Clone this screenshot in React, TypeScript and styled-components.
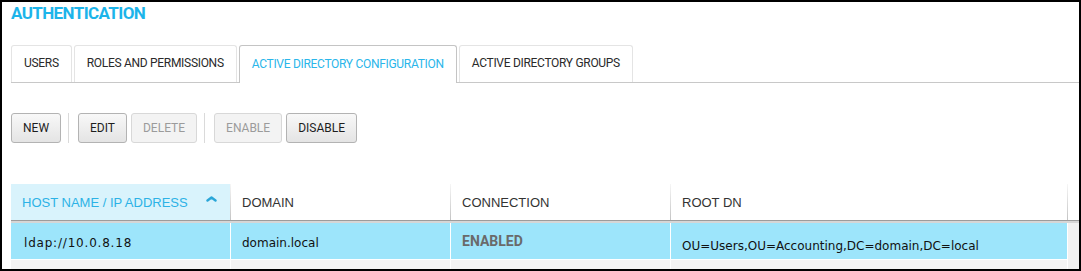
import React from 'react';
import styled, { createGlobalStyle, css } from 'styled-components';

const GlobalStyle = createGlobalStyle`
  html, body { margin: 0; padding: 0; background: #fff; }
  * { box-sizing: border-box; }
`;

const ui = `Roboto, "Liberation Sans", sans-serif`;

const Frame = styled.div`
  width: 1081px;
  height: 271px;
  border: 2px solid #000;
  background: #fff;
  padding-left: 9px;
  overflow: hidden;
  font-family: ${ui};
`;

const Title = styled.h1`
  margin: 0;
  height: 43px;
  font-size: 17px;
  line-height: 22px;
  font-weight: 700;
  letter-spacing: -0.6px;
  color: #1cb4ea;
`;

const TabBar = styled.div`
  display: flex;
  gap: 2px;
  height: 38px;
  border-bottom: 1px solid #c8c8c8;
`;

const Tab = styled.div<{ $active?: boolean }>`
  display: flex;
  align-items: center;
  height: 37px;
  padding: 0 12px 2px;
  border: 1px solid #e4e4e4;
  border-bottom: none;
  border-radius: 3px 3px 0 0;
  background: #fff;
  color: #2a2a2a;
  font-size: 12px;
  letter-spacing: -0.3px;
  white-space: nowrap;
  ${p => p.$active && css`
    height: 38px;
    margin-bottom: -1px;
    border-color: #c4c4c4;
    color: #2ab6ea;
  `}
`;

const Toolbar = styled.div`
  display: flex;
  align-items: center;
  gap: 4px;
  margin-top: 30px;
  height: 30px;
`;

const Button = styled.button<{ $disabled?: boolean }>`
  height: 30px;
  padding: 0 11px;
  border: 1px solid #b3b3b3;
  border-radius: 3px;
  background: linear-gradient(#f8f8f8, #e4e4e4);
  color: #1e1e1e;
  font-family: ${ui};
  font-size: 12px;
  ${p => p.$disabled && css`
    border-color: #d8d8d8;
    background: #f3f3f3;
    color: #9b9b9b;
  `}
`;

const Separator = styled.div`
  width: 1px;
  height: 30px;
  background: #dadada;
  margin: 0 5px 0 3px;
`;

const Table = styled.div`
  margin-top: 41px;
  width: 1068px;
  font-family: "Liberation Sans", Arial, sans-serif;
`;

const HeaderRow = styled.div`
  display: grid;
  grid-template-columns: 220px 220px 220px 397px 11px;
  height: 37px;
  border-bottom: 1px solid #9c9c9c;
`;

const HeaderCell = styled.div<{ $sorted?: boolean }>`
  position: relative;
  display: flex;
  align-items: center;
  justify-content: space-between;
  padding: 0 14px 0 11px;
  font-size: 13px;
  color: #333;
  background: ${p => (p.$sorted ? '#d9f3fc' : '#fff')};
  ${p => p.$sorted && css`color: #2cb2e6;`}
  &::after {
    content: '';
    position: absolute;
    right: 0;
    top: 0;
    bottom: 0;
    width: 1px;
    background: linear-gradient(#f6f6f6, #c4c4c4);
  }
`;

const Gutter = styled.div`
  background: #fff;
`;

const Body = styled.div`
  display: flex;
  border-top: 2px solid #d6d6d6;
`;

const Rows = styled.div`
  width: 1057px;
`;

const ScrollTrack = styled.div`
  flex: 1;
  background: #f1f1f1;
`;

const Row = styled.div<{ $selected?: boolean }>`
  display: grid;
  grid-template-columns: 220px 220px 220px 397px;
  height: 37px;
  border-bottom: 1px solid #fff;
  background: ${p => (p.$selected ? '#9de5fb' : '#f4f4f4')};
`;

const Cell = styled.div<{ $drop?: number; $spread?: number }>`
  display: flex;
  align-items: center;
  padding: ${p => p.$drop ?? 4}px 8px 0 11px;
  border-right: 1px solid #fff;
  font-family: "DejaVu Sans", Verdana, sans-serif;
  font-size: 12px;
  letter-spacing: ${p => p.$spread ?? 0}px;
  color: #111;
  white-space: nowrap;
  &:first-child { padding-left: 13px; }
`;

const Status = styled.span`
  font-family: ${ui};
  font-size: 14px;
  font-weight: 700;
  color: #6a6a6a;
  margin-bottom: 4px;
`;

const SortIcon = styled.svg`
  width: 11px;
  height: 6px;
  margin-bottom: 6px;
`;

export default function App() {
  return (
    <>
      <GlobalStyle />
      <Frame>
        <Title>AUTHENTICATION</Title>
        <TabBar>
          <Tab>USERS</Tab>
          <Tab>ROLES AND PERMISSIONS</Tab>
          <Tab $active>ACTIVE DIRECTORY CONFIGURATION</Tab>
          <Tab>ACTIVE DIRECTORY GROUPS</Tab>
        </TabBar>
        <Toolbar>
          <Button>NEW</Button>
          <Separator />
          <Button>EDIT</Button>
          <Button $disabled>DELETE</Button>
          <Separator />
          <Button $disabled>ENABLE</Button>
          <Button>DISABLE</Button>
        </Toolbar>
        <Table>
          <HeaderRow>
            <HeaderCell $sorted>
              HOST NAME / IP ADDRESS
              <SortIcon viewBox="0 0 11 6">
                <polyline points="1.5,4.5 5.5,1.5 9.5,4.5" fill="none" stroke="#2aa6d8" strokeWidth="2.4" strokeLinecap="round" strokeLinejoin="round" />
              </SortIcon>
            </HeaderCell>
            <HeaderCell>DOMAIN</HeaderCell>
            <HeaderCell>CONNECTION</HeaderCell>
            <HeaderCell>ROOT DN</HeaderCell>
            <Gutter />
          </HeaderRow>
          <Body>
            <Rows>
              <Row $selected>
                <Cell $spread={0.8}>ldap://10.0.8.18</Cell>
                <Cell>domain.local</Cell>
                <Cell><Status>ENABLED</Status></Cell>
                <Cell $drop={9}>OU=Users,OU=Accounting,DC=domain,DC=local</Cell>
              </Row>
              <Row>
                <Cell />
                <Cell />
                <Cell />
                <Cell />
              </Row>
            </Rows>
            <ScrollTrack />
          </Body>
        </Table>
      </Frame>
    </>
  );
}
